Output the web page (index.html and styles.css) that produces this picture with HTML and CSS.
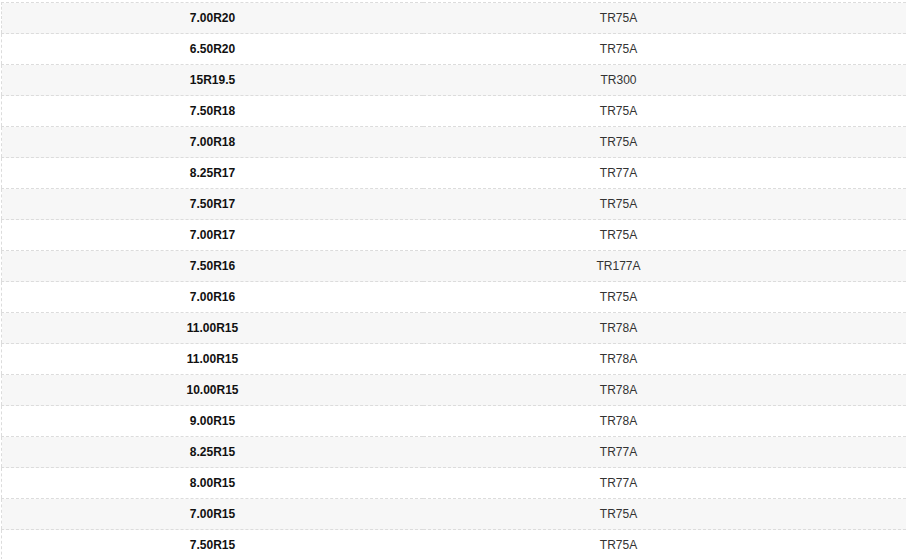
FILE: index.html
```html
<!DOCTYPE html>
<html>
<head>
<meta charset="utf-8">
<link rel="stylesheet" href="styles.css">
</head>
<body>
<div class="wrap">
<table class="spec">
<tbody>
<tr><td class="size">7.00R20</td><td class="valve">TR75A</td></tr>
<tr><td class="size">6.50R20</td><td class="valve">TR75A</td></tr>
<tr><td class="size">15R19.5</td><td class="valve">TR300</td></tr>
<tr><td class="size">7.50R18</td><td class="valve">TR75A</td></tr>
<tr><td class="size">7.00R18</td><td class="valve">TR75A</td></tr>
<tr><td class="size">8.25R17</td><td class="valve">TR77A</td></tr>
<tr><td class="size">7.50R17</td><td class="valve">TR75A</td></tr>
<tr><td class="size">7.00R17</td><td class="valve">TR75A</td></tr>
<tr><td class="size">7.50R16</td><td class="valve">TR177A</td></tr>
<tr><td class="size">7.00R16</td><td class="valve">TR75A</td></tr>
<tr><td class="size">11.00R15</td><td class="valve">TR78A</td></tr>
<tr><td class="size">11.00R15</td><td class="valve">TR78A</td></tr>
<tr><td class="size">10.00R15</td><td class="valve">TR78A</td></tr>
<tr><td class="size">9.00R15</td><td class="valve">TR78A</td></tr>
<tr><td class="size">8.25R15</td><td class="valve">TR77A</td></tr>
<tr><td class="size">8.00R15</td><td class="valve">TR77A</td></tr>
<tr><td class="size">7.00R15</td><td class="valve">TR75A</td></tr>
<tr><td class="size">7.50R15</td><td class="valve">TR75A</td></tr>
</tbody>
</table>
</div>
</body>
</html>
```

FILE: styles.css
```css
html, body {
  margin: 0;
  padding: 0;
  background: #ffffff;
  overflow: hidden;
}
.wrap {
  padding: 2px 0 0 1px;
}
.spec {
  width: 905px;
  border-collapse: collapse;
  border-left: 1px dashed #dcdcdc;
  border-top: 1px dashed #dcdcdc;
  font-family: "Liberation Sans", Arial, sans-serif;
  font-size: 12px;
  color: #333333;
  table-layout: fixed;
}
.spec tr {
  height: 31px;
}
.spec tr:nth-child(odd) {
  background: #f7f7f7;
}
.spec td {
  border-bottom: 1px dashed #dcdcdc;
  text-align: center;
  vertical-align: middle;
  padding: 0;
  height: 30px;
}
.spec .size {
  width: 421px;
  font-weight: bold;
  color: #111111;
}
.spec .valve {
  padding-right: 92px;
  color: #333333;
}
```
